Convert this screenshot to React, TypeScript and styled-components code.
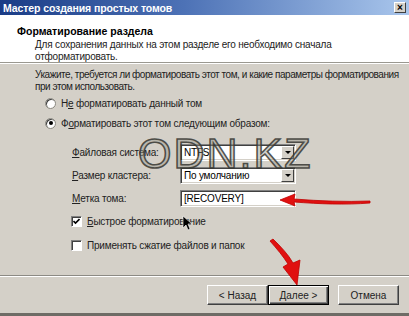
import React from "react";
import styled, { createGlobalStyle } from "styled-components";

const GlobalStyle = createGlobalStyle`
  html, body {
    margin: 0;
    padding: 0;
    background: #d4d0c8;
  }
  body {
    font-family: "Liberation Sans", Arial, sans-serif;
    font-size: 10px;
    color: #000;
  }
`;

const Window = styled.div`
  position: relative;
  width: 409px;
  height: 316px;
  display: flex;
  flex-direction: column;
  background: #d4d0c8;
  border-bottom: 3px solid #6e6c66;
  box-sizing: border-box;
  overflow: hidden;
`;

const TitleBar = styled.div`
  height: 15px;
  flex: none;
  display: flex;
  align-items: center;
  justify-content: space-between;
  padding: 0 3px 0 3px;
  background: linear-gradient(to right, #1a3c86 0%, #4d72b6 45%, #a9c6ec 100%);
`;

const TitleText = styled.span`
  color: #fff;
  font-weight: bold;
  font-size: 10.5px;
  letter-spacing: -0.1px;
`;

const CloseButton = styled.span`
  width: 12px;
  height: 11px;
  display: flex;
  align-items: center;
  justify-content: center;
  background: #d4d0c8;
  border: 1px solid;
  border-color: #fff #404040 #404040 #fff;
  box-sizing: border-box;
  font-weight: bold;
  font-size: 10px;
  line-height: 1;
`;

const Header = styled.div`
  height: 48px;
  flex: none;
  background: #fff;
  padding: 10px 0 0 17px;
  box-sizing: border-box;
  border-bottom: 1px solid #9a9890;
  box-shadow: 0 1px 0 #fff;
`;

const HeaderTitle = styled.div`
  font-weight: bold;
  font-size: 10.5px;
  line-height: 12px;
`;

const HeaderText = styled.div`
  margin: 2px 0 0 18px;
  line-height: 12px;
  color: #222;
  letter-spacing: -0.2px;
`;

const Body = styled.div`
  flex: 1;
  padding: 6px 0 0 35px;
  position: relative;
  letter-spacing: -0.2px;
`;

const Intro = styled.div`
  line-height: 12px;
  color: #222;
  white-space: nowrap;
  letter-spacing: -0.45px;
`;

const OptionRow = styled.label<{ $indent: number; $top: number }>`
  display: flex;
  align-items: center;
  height: 14px;
  margin: ${(p) => p.$top}px 0 0 ${(p) => p.$indent}px;
  gap: 5px;
  color: #222;
`;

const Radio = styled.span<{ $checked?: boolean }>`
  width: 11px;
  height: 11px;
  border-radius: 50%;
  background: #fff;
  box-sizing: border-box;
  border: 1px solid #8a8880;
  box-shadow: inset 1px 1px 0 #404040;
  display: flex;
  align-items: center;
  justify-content: center;
  &::after {
    content: "";
    width: 4px;
    height: 4px;
    border-radius: 50%;
    background: ${(p) => (p.$checked ? "#000" : "transparent")};
  }
`;

const Checkbox = styled.span`
  width: 11px;
  height: 11px;
  background: #fff;
  box-sizing: border-box;
  border: 1px solid;
  border-color: #808080 #fff #fff #808080;
  box-shadow: inset 1px 1px 0 #404040;
  display: flex;
  align-items: center;
  justify-content: center;
`;

const FormGrid = styled.div`
  display: grid;
  grid-template-columns: 108px 116px;
  grid-auto-rows: 17px;
  row-gap: 6px;
  margin: 14px 0 0 37px;
  align-items: center;
`;

const FieldLabel = styled.span`
  color: #222;
`;

const Field = styled.div`
  height: 17px;
  background: #fff;
  box-sizing: border-box;
  border: 1px solid;
  border-color: #808080 #fff #fff #808080;
  box-shadow: inset 1px 1px 0 #404040, inset -1px -1px 0 #d4d0c8;
  display: flex;
  align-items: center;
  padding-left: 3px;
  justify-content: space-between;
`;

const DropButton = styled.span`
  width: 13px;
  height: 13px;
  margin-right: 1px;
  background: #d4d0c8;
  box-sizing: border-box;
  border: 1px solid;
  border-color: #fff #404040 #404040 #fff;
  display: flex;
  align-items: center;
  justify-content: center;
  &::after {
    content: "";
    border-left: 3px solid transparent;
    border-right: 3px solid transparent;
    border-top: 3px solid #000;
  }
`;

const Footer = styled.div`
  height: 38px;
  flex: none;
  border-top: 1px solid #8c8a84;
  box-shadow: inset 0 1px 0 #fff;
  display: flex;
  justify-content: flex-end;
  align-items: flex-start;
  padding: 9px 10px 0 0;
  box-sizing: border-box;
`;

const Button = styled.button<{ $default?: boolean; $gap?: number }>`
  width: 61px;
  height: 20px;
  margin-left: ${(p) => p.$gap ?? 0}px;
  font-family: inherit;
  font-size: 10px;
  color: #222;
  background: #d4d0c8;
  box-sizing: border-box;
  border: 1px solid;
  border-color: ${(p) => (p.$default ? "#000" : "#fff #404040 #404040 #fff")};
  box-shadow: ${(p) =>
    p.$default
      ? "inset 1px 1px 0 #fff, inset -1px -1px 0 #404040, inset -2px -2px 0 #808080"
      : "inset -1px -1px 0 #808080"};
  padding: 0;
`;

const Watermark = styled.div`
  position: absolute;
  left: 138px;
  top: 132px;
  font-family: "Liberation Sans", Arial, sans-serif;
  font-size: 43px;
  line-height: 43px;
  letter-spacing: 2px;
  color: rgba(150, 148, 138, 0.45);
  -webkit-text-stroke: 1.6px rgba(55, 55, 50, 0.85);
  pointer-events: none;
`;

const Overlay = styled.svg`
  position: absolute;
  left: 0;
  top: 0;
  pointer-events: none;
`;

export default function App() {
  return (
    <>
      <GlobalStyle />
      <Window>
        <TitleBar>
          <TitleText>Мастер создания простых томов</TitleText>
          <CloseButton>×</CloseButton>
        </TitleBar>
        <Header>
          <HeaderTitle>Форматирование раздела</HeaderTitle>
          <HeaderText>
            Для сохранения данных на этом разделе его необходимо сначала
            <br />
            отформатировать.
          </HeaderText>
        </Header>
        <Body>
          <Intro>
            Укажите, требуется ли форматировать этот том, и какие параметры форматирования
            <br />
            при этом использовать.
          </Intro>
          <OptionRow $indent={10} $top={3}>
            <Radio />
            <span>
              Н<u>е</u> форматировать данный том
            </span>
          </OptionRow>
          <OptionRow $indent={10} $top={6}>
            <Radio $checked />
            <span>
              Ф<u>о</u>рматировать этот том следующим образом:
            </span>
          </OptionRow>
          <FormGrid>
            <FieldLabel>
              <u>Ф</u>айловая система:
            </FieldLabel>
            <Field>
              <span>NTFS</span>
              <DropButton />
            </Field>
            <FieldLabel>
              <u>Р</u>азмер кластера:
            </FieldLabel>
            <Field>
              <span>По умолчанию</span>
              <DropButton />
            </Field>
            <FieldLabel>
              <u>М</u>етка тома:
            </FieldLabel>
            <Field>
              <span>[RECOVERY]</span>
            </Field>
          </FormGrid>
          <OptionRow $indent={36} $top={7}>
            <Checkbox>
              <svg width="7" height="7" viewBox="0 0 7 7">
                <path d="M0.5 3 L2.5 5 L6.5 1" stroke="#000" strokeWidth="1.6" fill="none" />
              </svg>
            </Checkbox>
            <span>
              <u>Б</u>ыстрое форматирование
            </span>
          </OptionRow>
          <OptionRow $indent={36} $top={10}>
            <Checkbox />
            <span>Применять сжатие файлов и папок</span>
          </OptionRow>
        </Body>
        <Footer>
          <Button>&lt; Назад</Button>
          <Button $default>Далее &gt;</Button>
          <Button $gap={9}>Отмена</Button>
        </Footer>
        <Watermark>ODN.KZ</Watermark>
        <Overlay width="409" height="316" viewBox="0 0 409 316">
          <path
            d="M183 216 L183 228 L186 225 L188 230 L190 229 L188 224 L192 224 Z"
            fill="#000"
            stroke="#fff"
            strokeWidth="0.6"
          />
          <path
            d="M370 201 C345 202 320 201 294 199 L295 194 L280 200 L295 206 L294 202 C320 204 345 205 370 203 Z"
            fill="#e01010"
            stroke="#c00000"
            strokeWidth="0.8"
          />
          <path
            d="M270 241 C277 249 283 256 288 264 L283 267 L297 285 L300 260 L293 263 C288 254 281 247 273 239 Z"
            fill="#e01010"
            stroke="#c00000"
            strokeWidth="0.8"
          />
        </Overlay>
      </Window>
    </>
  );
}
